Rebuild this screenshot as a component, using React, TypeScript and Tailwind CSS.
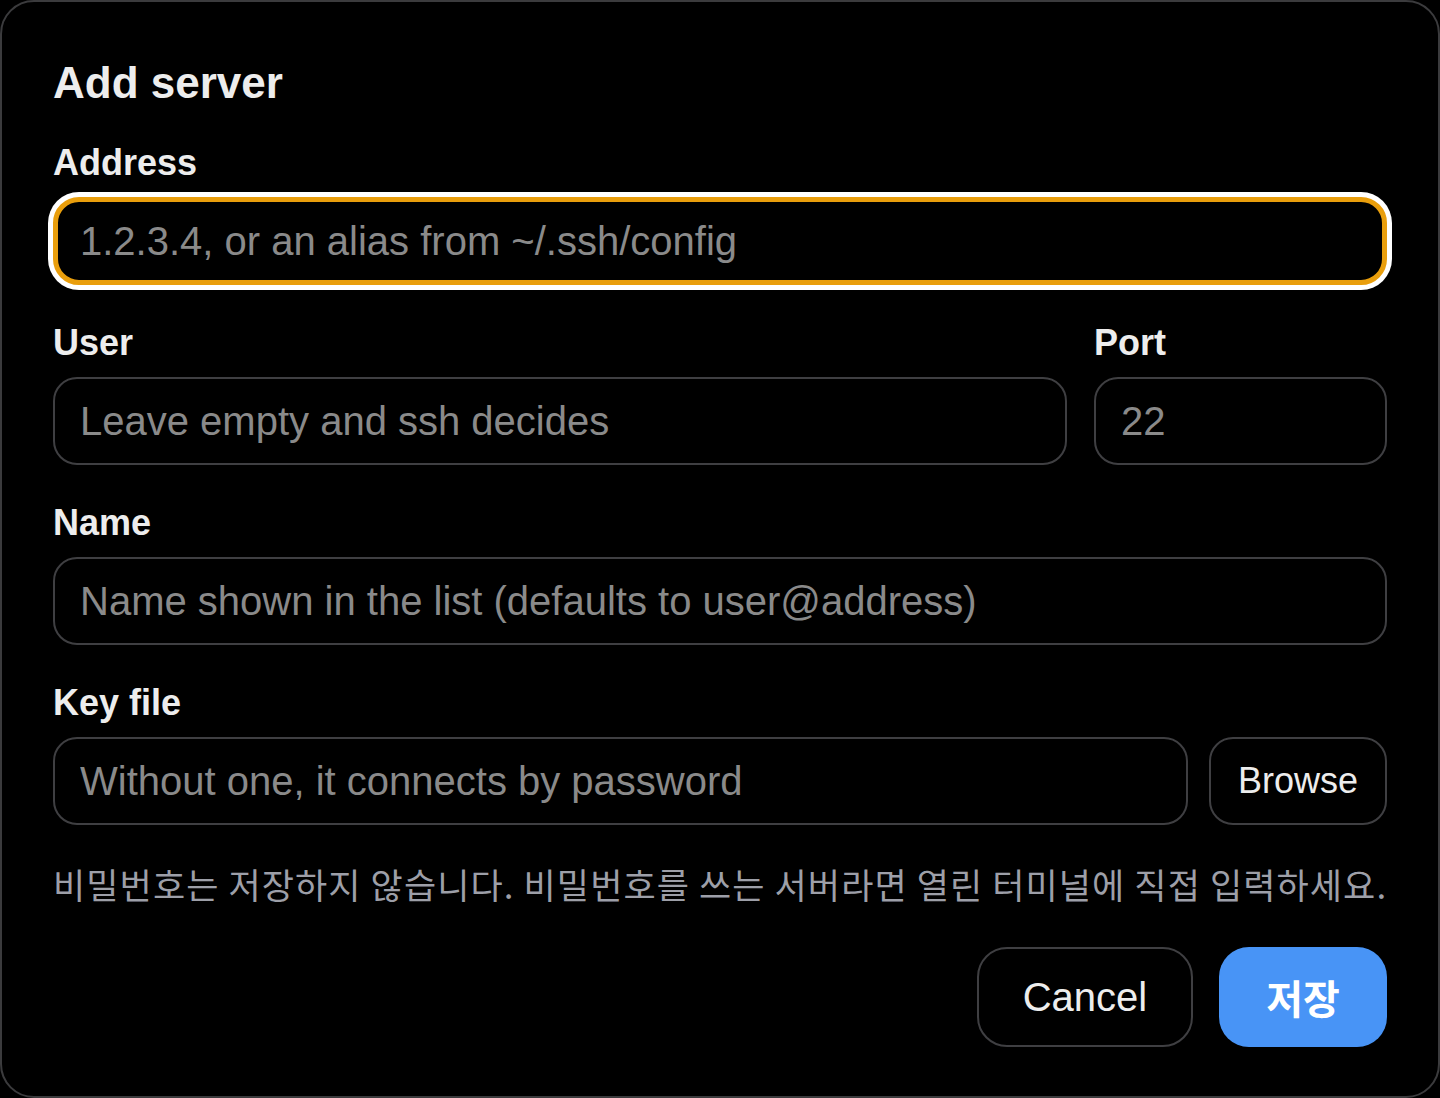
import React from "react";

const SANS = "font-['Liberation_Sans','Noto_Sans_CJK_KR',Arial,sans-serif]";

function Label({ children }: { children: React.ReactNode }) {
  return (
    <div className="text-[36px] leading-none font-bold text-[#ededed] mb-[16px]">
      {children}
    </div>
  );
}

function Field({
  placeholder,
  focused = false,
}: {
  placeholder: string;
  focused?: boolean;
}) {
  return (
    <input
      readOnly
      placeholder={placeholder}
      className={
        focused
          ? "block w-full h-[88px] rounded-[26px] bg-black border-[5px] border-[#e99e0c] ring-[5px] ring-white pl-[22px] pr-[22px] text-[40px] text-[#ededed] placeholder:text-[#8a8a8a] outline-none"
          : "block w-full h-[88px] rounded-[24px] bg-black border-2 border-[#3f3f42] pl-[25px] pr-[25px] text-[40px] text-[#ededed] placeholder:text-[#8a8a8a] outline-none"
      }
    />
  );
}

export default function App() {
  return (
    <div className={`${SANS} w-[1440px] h-[1098px] bg-black`}>
      <div className="w-[1440px] h-[1098px] bg-black border-2 border-[#3b3b3d] rounded-[34px] pl-[51px] pr-[51px] pt-[59px] flex flex-col overflow-hidden">
        <h1 className="text-[44px] leading-none font-bold text-[#ededed]">
          Add server
        </h1>

        <div className="mt-[40px]">
          <Label>Address</Label>
          <Field placeholder="1.2.3.4, or an alias from ~/.ssh/config" focused />
        </div>

        <div className="mt-[40px] flex gap-[27px]">
          <div className="flex-1">
            <Label>User</Label>
            <Field placeholder="Leave empty and ssh decides" />
          </div>
          <div className="w-[293px]">
            <Label>Port</Label>
            <Field placeholder="22" />
          </div>
        </div>

        <div className="mt-[40px]">
          <Label>Name</Label>
          <Field placeholder="Name shown in the list (defaults to user@address)" />
        </div>

        <div className="mt-[40px]">
          <Label>Key file</Label>
          <div className="flex gap-[21px]">
            <div className="flex-1">
              <Field placeholder="Without one, it connects by password" />
            </div>
            <button className="w-[178px] h-[88px] rounded-[24px] border-2 border-[#3f3f42] bg-black text-[36px] text-[#ededed]">
              Browse
            </button>
          </div>
        </div>

        <p className="mt-[41px] whitespace-nowrap font-['Noto_Sans_CJK_KR','Liberation_Sans',sans-serif] text-[35px] leading-none tracking-[1.1px] text-[#9d9fa8]">
          비밀번호는 저장하지 않습니다. 비밀번호를 쓰는 서버라면 열린 터미널에 직접 입력하세요.
        </p>

        <div className="mt-[46px] flex justify-end gap-[26px]">
          <button className="w-[216px] h-[100px] rounded-[30px] border-2 border-[#3f3f42] bg-black text-[40px] text-[#ededed]">
            Cancel
          </button>
          <button className="w-[168px] h-[100px] rounded-[30px] bg-[#4894f6] text-[40px] font-bold text-white font-['Noto_Sans_CJK_KR','Liberation_Sans',sans-serif]">
            저장
          </button>
        </div>
      </div>
    </div>
  );
}
